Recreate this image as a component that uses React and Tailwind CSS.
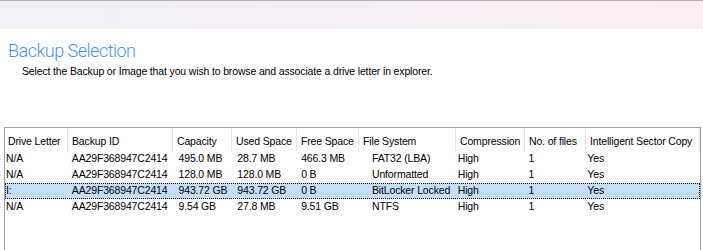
import React from 'react'

const columns = [
    { title: 'Drive Letter', width: 'w-[63px]', pad: 'pl-0' },
    { title: 'Backup ID', width: 'w-[105px]', pad: 'pl-[3px]' },
    { title: 'Capacity', width: 'w-[59px]', pad: 'pl-[5px]' },
    { title: 'Used Space', width: 'w-[65px]', pad: 'pl-[5px]' },
    { title: 'Free Space', width: 'w-[62px]', pad: 'pl-[4px]' },
    { title: 'File System', width: 'w-[97px]', pad: 'pl-[13px]' },
    { title: 'Compression', width: 'w-[69px]', pad: 'pl-[2px]' },
    { title: 'No. of files', width: 'w-[61px]', pad: 'pl-[4px]' },
    { title: 'Intelligent Sector Copy', width: 'w-[114px]', pad: 'pl-[2px]' },
]

const rows = [
    ['N/A', 'AA29F368947C2414', '495.0 MB', '28.7 MB', '466.3 MB', 'FAT32 (LBA)', 'High', '1', 'Yes'],
    ['N/A', 'AA29F368947C2414', '128.0 MB', '128.0 MB', '0 B', 'Unformatted', 'High', '1', 'Yes'],
    ['I:', 'AA29F368947C2414', '943.72 GB', '943.72 GB', '0 B', 'BitLocker Locked', 'High', '1', 'Yes'],
    ['N/A', 'AA29F368947C2414', '9.54 GB', '27.8 MB', '9.51 GB', 'NTFS', 'High', '1', 'Yes'],
]

const App = () => {
    return (
        <div className="w-[703px] h-[250px] overflow-hidden bg-white text-black font-['Liberation_Sans',Arial,sans-serif] text-[10.5px] tracking-[-0.15px]">
            {/* wizard banner */}
            <div className="h-[29px] border-t border-[#b4b4b4] bg-gradient-to-r from-[#f0f0f6] to-[#faeef3]" />

            <div className="pl-[8px] pt-[11px]">
                <h1 className="font-['Roboto',sans-serif] font-light text-[18px] tracking-[-0.5px] leading-[22px] text-[#3f95e2]">
                    Backup Selection
                </h1>
                <p className="pl-[14px] pt-[2px] leading-[14px]">
                    Select the Backup or Image that you wish to browse and associate a drive letter in explorer.
                </p>
            </div>

            <div className="mt-[49px] ml-[4px] w-[697px] h-[200px] border border-[#a0a0a0]">
                <div className="flex h-[23px]">
                    {columns.map((col, i) => (
                        <div
                            key={col.title}
                            className={`${col.width} h-full pt-[6px] leading-[14px] border-r border-[#e5e5e5] ${i === 0 ? 'pl-[3px]' : 'pl-[4px]'} whitespace-nowrap`}
                        >
                            {col.title}
                        </div>
                    ))}
                </div>
                {rows.map((row, r) => (
                    <div
                        key={r}
                        className={`flex h-[16px] items-center w-[695px] ${r === 2 ? 'bg-[#c5dff6] border border-dotted border-black' : 'border border-transparent'}`}
                    >
                        {row.map((cell, i) => (
                            <div key={i} className={`${columns[i].width} ${columns[i].pad} whitespace-nowrap`}>
                                {cell}
                            </div>
                        ))}
                    </div>
                ))}
            </div>
        </div>
    )
}

export default App
